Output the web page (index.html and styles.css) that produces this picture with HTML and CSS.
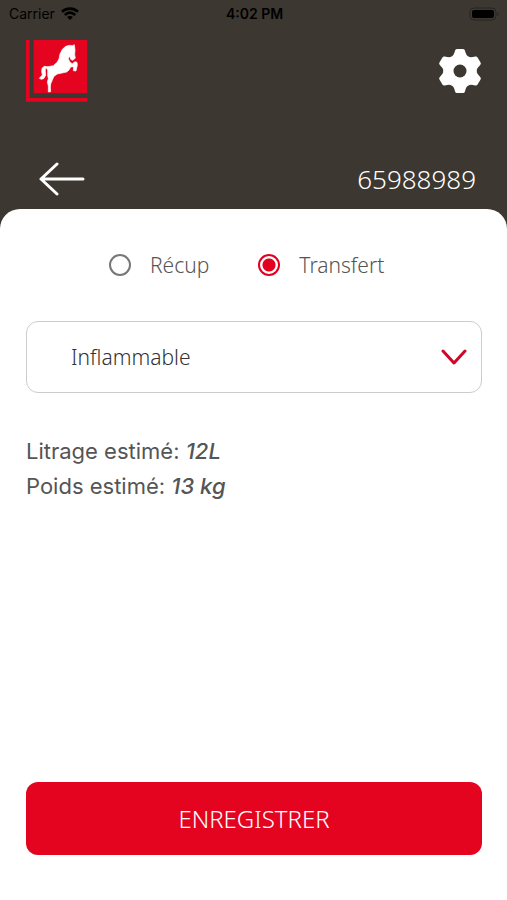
FILE: index.html
```html
<!DOCTYPE html>
<html lang="fr">
<head>
    <meta charset="UTF-8">
    <meta name="viewport" content="width=device-width, initial-scale=1.0">
    <title>Transfert</title>
    <link rel="stylesheet" href="styles.css">
</head>
<body>

    <!-- Header -->
    <header class="header">
        <div class="status-bar">
            <div class="carrier">
                <span>Carrier</span>
                <svg width="18" height="13" viewBox="0 0 18 13" fill="none" stroke="#000" stroke-width="2.6">
                    <path d="M1 4.8C5.6.6 12.4.6 17 4.8"/>
                    <path d="M3.8 8C7 5.1 11 5.1 14.2 8"/>
                    <path d="M9 13L6 10C7.8 8.5 10.2 8.5 12 10z" fill="#000" stroke="none"/>
                </svg>
            </div>
            <span class="time">4:02 PM</span>
            <svg class="battery" width="31" height="14" viewBox="0 0 31 14">
                <rect x="1" y="1" width="26" height="12" rx="4" fill="none" stroke="#292520"/>
                <rect x="3" y="3" width="22" height="8" rx="2" fill="#000"/>
                <path d="M28.5 5v4c2-1 2-3 0-4z" fill="#292520"/>
            </svg>
        </div>

        <div class="top-bar">
            <svg width="62" height="62" viewBox="78 120 186 186" role="img" aria-label="Logo">
                <path fill="#e5041f" d="M78 120h11v174h173v11H78zM101 120h161v160H101z"/>
                <path fill="#fff" stroke="#fff" stroke-width="2" stroke-linejoin="round" d="M223 134L225 150L224 164L226 174L219 181L212 178L209 168L205 176L210 187L217 191L225 185L231 187L232 195L228 213L220 212L221 200L212 201L207 210L200 216L186 219L172 222L162 229L157 240L152 252L151 264L152 275L145 276L145 258L142 246L145 236L143 226L143 211L140 204L136 206L136 214L137 226L131 236L124 238L118 235L127 225L125 215L126 205L132 199L144 200L160 197L172 186L177 176L180 162L187 148L197 139L209 136L217 137z"/>
            </svg>
            <button class="icon-button" type="button" aria-label="Paramètres">
                <svg width="44" height="44" viewBox="-22 -22 44 44">
                    <defs>
                        <path id="tooth" d="M-3 -20H3C4 -16 5 -14 7 -13V-10H-7V-13C-5 -14 -4 -16 -3 -20z" stroke-width="4" stroke-linejoin="round"/>
                    </defs>
                    <g fill="#fff" stroke="#fff">
                        <circle r="11" fill="none" stroke-width="10"/>
                        <use href="#tooth"/>
                        <use href="#tooth" transform="rotate(60)"/>
                        <use href="#tooth" transform="rotate(120)"/>
                        <use href="#tooth" transform="rotate(180)"/>
                        <use href="#tooth" transform="rotate(240)"/>
                        <use href="#tooth" transform="rotate(300)"/>
                    </g>
                    <circle r="6.5" fill="#3c3731"/>
                </svg>
            </button>
        </div>

        <div class="title-bar">
            <a class="back" href="#" aria-label="Retour">
                <svg width="46" height="34" viewBox="0 0 46 34" fill="none" stroke="#fff" stroke-width="3" stroke-linecap="round" stroke-linejoin="round">
                    <path d="M18 2L2 17L18 32M2 17H44"/>
                </svg>
            </a>
            <h1>65988989</h1>
        </div>
    </header>

    <!-- Form -->
    <main class="sheet">
        <form class="form">
            <div class="radios">
                <label><input type="radio" name="type" value="recup"> Récup</label>
                <label><input type="radio" name="type" value="transfert" checked> Transfert</label>
            </div>

            <div class="select-box">
                <select name="produit" aria-label="Produit">
                    <option>Inflammable</option>
                </select>
                <svg class="chevron" width="26" height="16" viewBox="0 0 26 16" fill="none" stroke="#d0062a" stroke-width="3" stroke-linecap="round" stroke-linejoin="round">
                    <path d="M2 2L13 14L24 2"/>
                </svg>
            </div>

            <div class="estimate">
                <p>Litrage estimé: <em>12L</em></p>
                <p>Poids estimé: <em>13 kg</em></p>
            </div>

            <button class="save-button" type="submit">ENREGISTRER</button>
        </form>
    </main>

</body>
</html>
```
FILE: styles.css
```css
* {
    margin: 0;
    padding: 0;
    box-sizing: border-box;
}

body {
    display: flex;
    flex-direction: column;
    min-height: 100vh;
    background-color: #3c3731;
    font-family: "Noto Sans", sans-serif;
    font-weight: 300;
    color: #4d4d4d;
}

svg {
    display: block;
}

/* Header */
.status-bar {
    display: grid;
    grid-template-columns: 1fr auto 1fr;
    align-items: center;
    height: 27px;
    padding: 0 7px 0 9px;
    font-family: "Inter", sans-serif;
    font-size: 14px;
    font-weight: 400;
    color: #000;
}

.carrier {
    display: flex;
    align-items: center;
    gap: 6px;
}

.time {
    font-weight: 600;
}

.battery {
    justify-self: end;
}

.top-bar {
    display: flex;
    justify-content: space-between;
    align-items: center;
    padding: 13px 25px 0 26px;
}

.icon-button {
    border: none;
    background: none;
    cursor: pointer;
}

.title-bar {
    display: flex;
    justify-content: space-between;
    align-items: center;
    height: 60px;
    margin-top: 47px;
    padding: 0 31px 0 39px;
}

.title-bar h1 {
    font-size: 26px;
    font-weight: 300;
    color: #fff;
}

/* Form */
.sheet {
    display: flex;
    flex: 1;
    padding: 40px 25px 45px 26px;
    border-radius: 20px 20px 0 0;
    background-color: #fff;
}

.form {
    display: flex;
    flex: 1;
    flex-direction: column;
}

.radios {
    display: flex;
    gap: 49px;
    padding-left: 83px;
    font-size: 21px;
    line-height: 32px;
    color: #555;
}

.radios label {
    display: flex;
    align-items: center;
    gap: 19px;
}

.radios input {
    appearance: none;
    width: 22px;
    height: 22px;
    border: 2px solid #777;
    border-radius: 50%;
}

.radios input:checked {
    border-color: #e2001f;
    background: radial-gradient(circle, #e2001f 6px, #fff 7px);
}

.select-box {
    display: grid;
    align-items: center;
    margin-top: 40px;
}

.select-box select,
.chevron {
    grid-area: 1 / 1;
}

.select-box select {
    appearance: none;
    width: 100%;
    height: 72px;
    padding: 0 60px 0 44px;
    border: 1px solid #ccc;
    border-radius: 12px;
    background-color: #fff;
    font: inherit;
    font-size: 21px;
    color: #333;
}

.chevron {
    justify-self: end;
    margin-right: 15px;
    pointer-events: none;
}

.estimate {
    margin-top: 41px;
    font-family: "Inter", sans-serif;
    font-size: 22px;
    font-weight: 400;
    line-height: 35px;
    color: #555;
}

.estimate em {
    font-weight: 500;
}

.save-button {
    height: 73px;
    margin-top: auto;
    border: none;
    border-radius: 12px;
    background-color: #e5041f;
    font: inherit;
    font-size: 24px;
    color: #fff;
    cursor: pointer;
}
```
